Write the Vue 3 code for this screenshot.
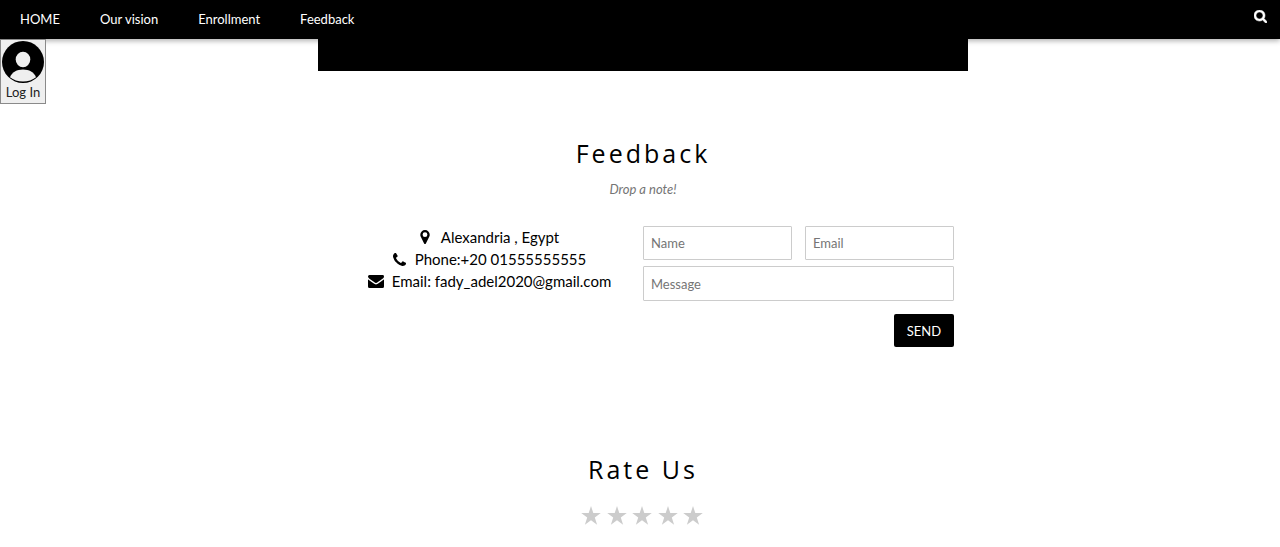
<script setup>
import { ref } from 'vue'

const links = [
  { label: 'HOME', href: '#home' },
  { label: 'Our vision', href: '#vision' },
  { label: 'Enrollment', href: '#enrollment' },
  { label: 'Feedback', href: '#feedback' },
]
const name = ref('')
const email = ref('')
const message = ref('')
const rating = ref(0)
</script>

<template>
  <header class="navbar">
    <nav class="links">
      <a v-for="link in links" :key="link.href" :href="link.href">{{ link.label }}</a>
    </nav>
    <button class="search" type="button" aria-label="Search">
      <svg viewBox="0 0 1664 1664" width="13" height="13">
        <path fill="currentColor" stroke="currentColor" stroke-width="70" d="M1152 704q0-185-131.500-316.500t-316.500-131.500-316.500 131.500-131.500 316.500 131.500 316.500 316.500 131.500 316.500-131.500 131.500-316.500zm512 832q0 52-38 90t-90 38q-54 0-90-38l-343-342q-179 124-399 124-143 0-273.500-55.500t-225-150-150-225-55.500-273.500 55.500-273.500 150-225 225-150 273.500-55.500 273.500 55.500 225 150 150 225 55.500 273.500q0 220-124 399l343 343q37 37 37 90z" />
      </svg>
    </button>
  </header>

  <main class="page">
    <button class="login" type="button">
      <svg viewBox="0 0 42 42" width="42" height="42" aria-hidden="true">
        <circle cx="21" cy="21" r="21" fill="#000" />
        <ellipse cx="21" cy="18.500" rx="7.300" ry="7.800" fill="#efefef" />
        <path fill="#efefef" d="M8 36.300C9.800 31.300 15 28.600 21 28.600S32.200 31.300 34 36.300C30.600 39 26 40.600 21 40.600S11.400 39 8 36.300Z" />
      </svg>
      <span>Log In</span>
    </button>

    <div class="banner"></div>

    <section id="feedback" class="feedback">
      <h2>Feedback</h2>
      <p class="note">Drop a note!</p>
      <div class="columns">
        <address class="contact">
          <div>
            <svg class="icon pin" viewBox="0 0 10 14" width="10" height="14" aria-hidden="true">
              <path fill="currentColor" fill-rule="evenodd" d="M5 0A4.700 4.700 0 0 1 9.700 4.700C9.700 5.500 9.500 6.200 9.200 6.800L5.900 13.400Q5.500 14 5 14T4.100 13.400L.8 6.800C.5 6.200.3 5.500.3 4.700A4.700 4.700 0 0 1 5 0ZM5 2.300A2.400 2.400 0 1 0 5 7.100 2.400 2.400 0 0 0 5 2.300Z" />
            </svg>
            <span>Alexandria , Egypt</span>
          </div>
          <div>
            <svg class="icon phone" viewBox="0 0 1408 1408" width="13" height="13" aria-hidden="true">
              <path fill="currentColor" d="M1408 1112q0 27-10 70.500t-21 68.500q-21 50-122 106-94 51-186 51-27 0-53-3.500t-57.500-12.500-47-14.500-55.500-20.500-49-18q-98-35-175-83-127-79-264-216t-216-264q-48-77-83-175-3-9-18-49t-20.500-55.500-14.500-47-12.500-57.500-3.500-53q0-92 51-186 56-101 106-122 25-11 68.500-21t70.500-10q14 0 21 3 18 6 53 76 11 19 30 54t35 63.500 31 53.500q3 4 17.500 25t21.500 35.500 7 28.500q0 20-28.500 50t-62 55-62 53-28.500 46q0 9 5 22.500t8.500 20.500 14 24 11.500 19q76 137 174 235t235 174q2 1 19 11.500t24 14 20.500 8.500 22.500 5q18 0 46-28.500t53-62 55-62 50-28.500q14 0 28.500 7t35.500 21.500 25 17.500q25 15 53.500 31t63.500 35 54 30q70 35 76 53 3 7 3 21z" />
            </svg>
            <span>Phone:+20 01555555555</span>
          </div>
          <div>
            <svg class="icon mail" viewBox="0 0 16 13" width="16" height="13" aria-hidden="true">
              <path fill="currentColor" d="M0 4.200Q.4 4.700 5.500 8.200C6.500 8.900 7.200 9.400 8 9.400S9.500 8.900 10.500 8.200Q15.500 4.800 16 4.200V11.500Q16 13 14.500 13H1.500Q0 13 0 11.500ZM1.400 0H14.600Q16 0 16 1.400C16 2.400 15.200 3.400 14.200 4.100L9.900 7.100C9.200 7.600 8.600 8.100 8 8.100S6.800 7.600 6.100 7.100L1.800 4.100C.9 3.500 0 2.300 0 1.500Q0 0 1.400 0Z" />
            </svg>
            <span>Email: fady_adel2020@gmail.com</span>
          </div>
        </address>
        <form class="form" @submit.prevent>
          <input v-model="name" type="text" placeholder="Name" aria-label="Name" />
          <input v-model="email" type="email" placeholder="Email" aria-label="Email" />
          <input v-model="message" class="wide" type="text" placeholder="Message" aria-label="Message" />
          <button class="send" type="submit">SEND</button>
        </form>
      </div>
    </section>

    <section class="rate">
      <h2 id="rate-title">Rate Us</h2>
      <div class="stars" role="radiogroup" aria-labelledby="rate-title">
        <label v-for="n in 5" :key="n" :class="{ on: n <= rating }">
          <input v-model="rating" type="radio" name="rating" :value="n" :aria-label="n + ' stars'" />
          <svg viewBox="0 0 20 19" width="20" height="19" aria-hidden="true">
            <path fill="currentColor" d="M10 0 12.300 7.100H19.800L13.800 11.500 16.100 18.700 10 14.300 3.900 18.700 6.200 11.500.2 7.100H7.700Z" />
          </svg>
        </label>
      </div>
    </section>
  </main>
</template>

<style>
body {
  margin: 0;
  background: #fff;
}
</style>

<style scoped>
* {
  box-sizing: border-box;
}
.navbar,
.page,
button,
input {
  font-family: Lato, "Liberation Sans", sans-serif;
}
.navbar {
  position: relative;
  z-index: 2;
  display: flex;
  justify-content: space-between;
  align-items: flex-start;
  height: 39px;
  background: #000;
  color: #fff;
  box-shadow: 0 2px 5px rgba(0, 0, 0, 0.3);
}
.links {
  display: flex;
}
.links a {
  padding: 0 20px;
  font-size: 13px;
  line-height: 39px;
  color: inherit;
  text-decoration: none;
}
.search {
  display: flex;
  padding: 10px 13px;
  border: 0;
  background: none;
  color: inherit;
}
.page {
  position: relative;
  padding: 0 0 20px 6px;
  color: #000;
}
.login {
  position: absolute;
  top: 0;
  left: 0;
  z-index: 3;
  display: flex;
  flex-direction: column;
  align-items: center;
  padding: 1px;
  border: 1px solid #8a8a8a;
  background: #efefef;
  color: #222;
  font-size: 13px;
  line-height: 19px;
}
.banner,
.feedback,
.rate {
  max-width: 650px;
  margin: 0 auto;
}
.banner {
  position: relative;
  z-index: 3;
  height: 32px;
  background: #000;
}
.feedback {
  padding: 64px 14px 0;
}
h2 {
  margin: 0;
  font-family: "Open Sans", "Noto Sans", sans-serif;
  font-size: 25px;
  font-weight: 400;
  line-height: 36px;
  letter-spacing: 3px;
  text-align: center;
}
.note {
  margin: 8px 0 27px;
  font-size: 13px;
  font-style: italic;
  line-height: 20px;
  text-align: center;
  color: #757575;
}
.columns {
  display: grid;
  grid-template-columns: 1fr 1fr;
}
.contact {
  display: flex;
  flex-direction: column;
  align-items: center;
  padding-left: 4px;
  font-size: 15px;
  font-style: normal;
  line-height: 22px;
}
.contact div {
  display: flex;
  align-items: center;
}
.icon {
  margin-right: 8px;
}
.pin {
  margin-right: 11px;
}
.phone {
  margin-right: 9px;
}
.form {
  display: grid;
  grid-template-columns: 1fr 1fr;
  column-gap: 13px;
  row-gap: 6px;
}
.form input {
  min-width: 0;
  height: 34px;
  padding: 0 7px;
  border: 1px solid #ccc;
  border-radius: 1px;
  font-size: 13px;
}
.form input::placeholder {
  color: #757575;
}
.form .wide {
  grid-column: 1 / -1;
  height: 35px;
}
.send {
  grid-column: 1 / -1;
  justify-self: end;
  width: 60px;
  height: 33px;
  margin-top: 7px;
  padding: 0;
  border: 0;
  border-radius: 2px;
  background: #000;
  color: #fff;
  font-size: 13px;
}
.rate {
  padding-top: 104px;
}
.stars {
  display: flex;
  justify-content: space-between;
  width: 124px;
  padding-right: 2px;
  margin: 19px auto 0;
  color: #ccc;
}
.stars label {
  position: relative;
  display: flex;
}
.stars .on {
  color: #ffc700;
}
.stars input {
  position: absolute;
  inset: 0;
  margin: 0;
  opacity: 0;
}
</style>
